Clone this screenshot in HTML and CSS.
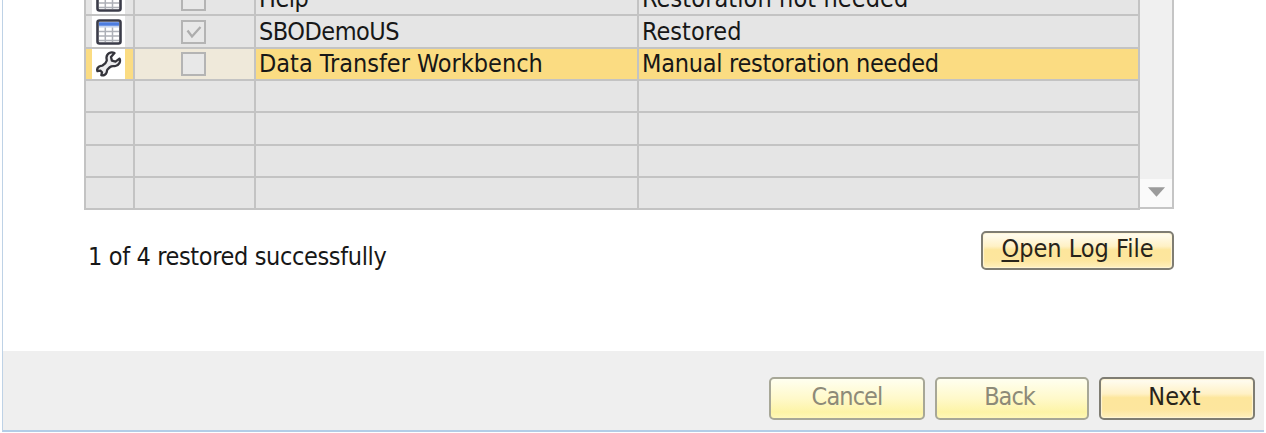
FILE: index.html
```html
<!DOCTYPE html>
<html lang="en">
<head>
<meta charset="utf-8">
<title>Restoration Wizard</title>
<link rel="stylesheet" href="styles.css">
</head>
<body>
<svg class="defs" aria-hidden="true">
  <symbol id="table" viewBox="0 0 26 26">
    <rect x="1.5" y="1.5" width="23" height="23" rx="2" fill="#fff" stroke="#3b3c49" stroke-width="2.6"/>
    <path d="M3 3.2h20v3.6H3z" fill="#4d7de0"/>
    <path d="M3 7.8h20" stroke="#c3d3ef" stroke-width="1.5"/>
    <path d="M3 12.500h20M3 17h20M3 21.400h20M9.300 8.500v14.500M16.500 8.500v14.500" stroke="#adb0b7" stroke-width="1.500"/>
  </symbol>
  <symbol id="wrench" viewBox="0 0 26 26">
    <path d="M18.500 2C15 .2 10.800 2.300 10.500 6.300c-.1 1.500.4 2.400.2 3.400-.3 1.400-2.600 3.700-4.200 4.800-1 .6-2.300.3-3.600 1.200-1.600 1.100-2 3-1.400 4.500l2.800-.6 1.700 1.700-.7 2.900c2.200.7 4.800-.6 5.400-3 .3-1.100.1-1.800.8-2.600 1.100-1.300 2.400-2.600 3.800-3.200 1.300-.5 2.600 0 4.200-.4 3.500-.9 5.500-4.300 4-7.400l-4 3-3.600-1-.9-3.600z" fill="#ececee" stroke="#34343b" stroke-width="2.300" stroke-linejoin="round"/>
  </symbol>
</svg>
<main class="window">
  <section class="content">
    <div class="grid-area">
      <div class="grid">
        <div class="row"><div class="cell type"><span class="tile"><svg><use href="#table"/></svg></span></div><div class="cell pick"><span class="check"></span></div><div class="cell"><span class="t help">Help</span></div><div class="cell"><span class="t notneeded">Restoration not needed</span></div></div>
        <div class="row tall"><div class="cell type"><span class="tile"><svg><use href="#table"/></svg></span></div><div class="cell pick"><span class="check"><svg viewBox="0 0 20 20"><path d="M4 8.500l4.500 6L17 5" fill="none" stroke="#adadad" stroke-width="2.300"/></svg></span></div><div class="cell"><span class="t demo">SBODemoUS</span></div><div class="cell"><span class="t">Restored</span></div></div>
        <div class="row selected"><div class="cell type"><span class="tile"><svg><use href="#wrench"/></svg></span></div><div class="cell pick"><span class="check"></span></div><div class="cell"><span class="t">Data Transfer Workbench</span></div><div class="cell"><span class="t manual">Manual restoration needed</span></div></div>
        <div class="row"><div class="cell"></div><div class="cell"></div><div class="cell"></div><div class="cell"></div></div>
        <div class="row tall"><div class="cell"></div><div class="cell"></div><div class="cell"></div><div class="cell"></div></div>
        <div class="row"><div class="cell"></div><div class="cell"></div><div class="cell"></div><div class="cell"></div></div>
        <div class="row"><div class="cell"></div><div class="cell"></div><div class="cell"></div><div class="cell"></div></div>
      </div>
      <div class="scrollbar"><div class="down"><svg viewBox="0 0 20 10"><path d="M1 0h18l-9 10z" fill="#9b9b9b"/></svg></div></div>
    </div>
    <div class="summary">
      <span class="t count">1 of 4 restored successfully</span>
      <button class="btn log"><span class="t open"><u>O</u>pen Log File</span></button>
    </div>
  </section>
  <footer class="footer">
    <button class="btn off cancel"><span class="t">Cancel</span></button>
    <button class="btn off back"><span class="t">Back</span></button>
    <button class="btn next"><span class="t">Next</span></button>
  </footer>
</main>
</body>
</html>
```

FILE: styles.css
```css
* { box-sizing: border-box; }
body { margin: 0; background: #fff; width: 1266px; height: 433px; overflow: hidden; font: 25px/30px "DejaVu Sans Condensed", "Noto Sans", sans-serif; color: #171717; }
.defs { display: none; }
.window { margin-left: 2px; width: 1262px; height: 432px; border-left: 1px solid #bed2e6; border-bottom: 2px solid #b3cde7; display: flex; flex-direction: column; overflow: hidden; }
.content { height: 351px; padding-left: 81px; }
.t { white-space: nowrap; }
.help { letter-spacing: -.5px; }
.notneeded { letter-spacing: .1px; }
.demo { letter-spacing: -.5px; }
.manual { letter-spacing: -.26px; }
.grid-area { display: flex; align-items: flex-start; height: 210px; }
.grid { width: 1056px; margin-top: -16px; border-left: 2px solid #c3c3c3; }
.row { display: grid; grid-template-columns: 49px 121px 383px 501px; height: 32px; }
.row.tall { height: 33px; }
.cell { height: 100%; border-right: 2px solid #c3c3c3; border-bottom: 2px solid #c3c3c3; background: #e5e5e5; padding-left: 3px; display: flex; align-items: center; }
.type { padding-left: 6px; }
.tile { width: 33px; height: 100%; background: #fff; display: flex; align-items: center; justify-content: center; }
.tile svg { width: 26px; height: 26px; display: block; }
.pick { padding-left: 46px; }
.check { width: 25px; height: 24px; border: 2px solid #b4b4b4; background: #e8e8e8; }
.check svg { display: block; width: 21px; height: 20px; }
.selected .cell { background: #fbdc82; }
.selected .pick { background: #efe9da; }
.scrollbar { width: 34px; height: 209px; background: #f0f0f0; border-right: 2px solid #c5c5c5; border-bottom: 2px solid #c5c5c5; display: flex; flex-direction: column; justify-content: flex-end; }
.down { height: 28px; background: #fafafa; display: flex; justify-content: center; padding-top: 8px; }
.down svg { width: 19px; height: 10px; }
.summary { width: 1090px; padding: 21px 0 0 4px; display: flex; justify-content: space-between; align-items: flex-start; }
.count { margin-top: 11px; letter-spacing: -.36px; }
.btn { font: inherit; color: #28241a; padding: 0 0 4px; height: 43px; border: 2px solid #7f7d73; border-radius: 5px; background: linear-gradient(#fffdf4, #fff1c5 38%, #fde69c 48%, #fde69e 78%, #fff0bd); box-shadow: inset 0 0 1px 1px #fff5d5; display: flex; justify-content: center; align-items: center; }
.log { width: 193px; height: 39px; }
.open u { text-underline-offset: 3px; text-decoration-thickness: 2px; }
.footer { flex: 1; background: #efefef; display: flex; justify-content: flex-end; align-items: flex-start; gap: 10px; padding: 26px 9px 0 0; }
.off { color: #8d8a78; border-color: #a7a797; background: linear-gradient(#fffff0, #fff9ca 50%, #fdf4a6 85%, #fff8b8); box-shadow: none; }
.cancel { width: 156px; letter-spacing: -.9px; }
.back { width: 154px; letter-spacing: -1px; padding-right: 5px; }
.next { width: 156px; padding-right: 5px; }
```
